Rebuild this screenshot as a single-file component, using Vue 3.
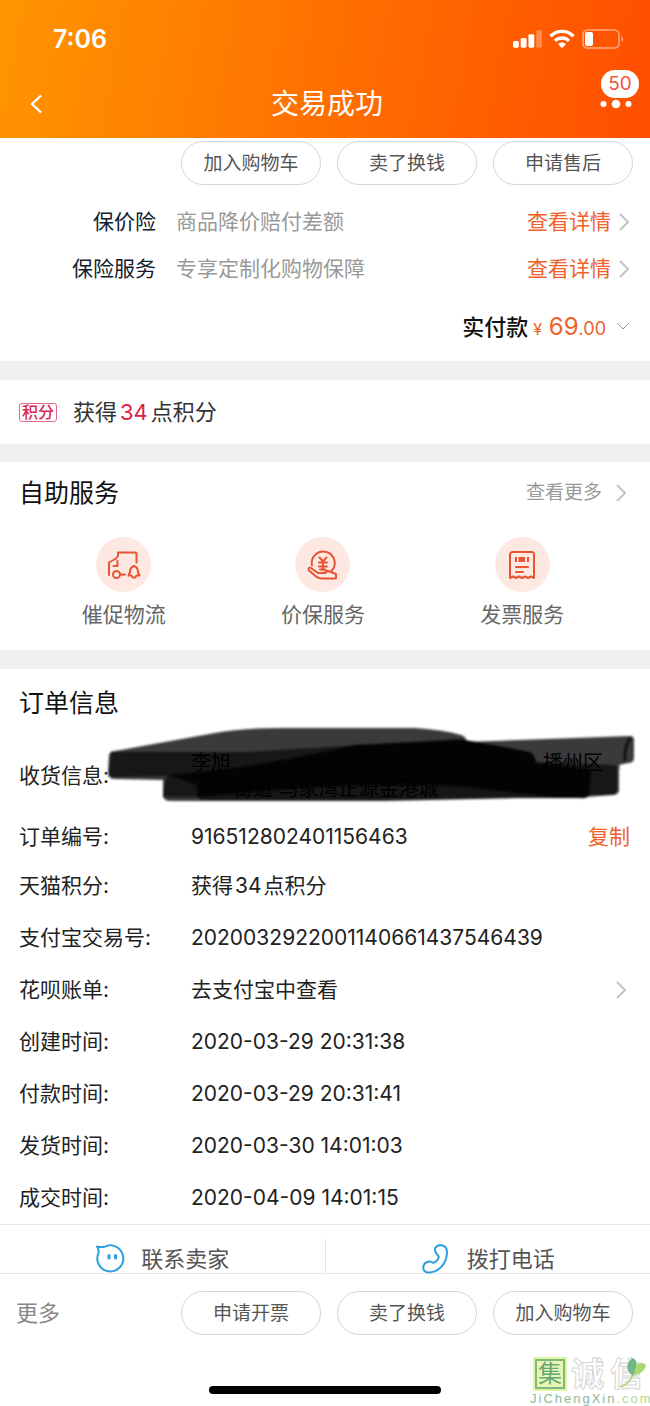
<script setup>
const insurance = [
  { name: '保价险', desc: '商品降价赔付差额' },
  { name: '保险服务', desc: '专享定制化购物保障' },
]
const topActions = ['加入购物车', '卖了换钱', '申请售后']
const bottomActions = ['申请开票', '卖了换钱', '加入购物车']
const services = [
  { id: 'truck', label: '催促物流' },
  { id: 'price', label: '价保服务' },
  { id: 'invoice', label: '发票服务' },
]
const details = [
  { label: '支付宝交易号:', value: '2020032922001140661437546439' },
  { label: '花呗账单:', value: '去支付宝中查看', link: true },
  { label: '创建时间:', value: '2020-03-29 20:31:38' },
  { label: '付款时间:', value: '2020-03-29 20:31:41' },
  { label: '发货时间:', value: '2020-03-30 14:01:03' },
  { label: '成交时间:', value: '2020-04-09 14:01:15' },
]
</script>

<template>
  <div class="page">
    <header class="header">
      <div class="status">
        <span class="time">7:06</span>
        <div class="signals">
          <svg width="29" height="18" viewBox="0 0 30 18" fill="#fff" aria-hidden="true">
            <rect x="0" y="11" width="6" height="7" rx="1.5" />
            <rect x="8" y="8" width="6" height="10" rx="1.5" />
            <rect x="16" y="4" width="6" height="14" rx="1.5" />
            <rect x="24" y="0" width="6" height="18" rx="1.5" opacity=".3" />
          </svg>
          <svg width="26" height="20" viewBox="0 0 26 20" fill="none" stroke="#fff" stroke-width="3.4" aria-hidden="true">
            <path d="M1.500 7.200C8 .8 18 .8 24.500 7.200" />
            <path d="M6 11.900c4-3.900 10-3.900 14 0" />
            <path d="M13 19.300l-4-4.200c2.400-2 5.600-2 8 0z" fill="#fff" stroke="none" />
          </svg>
          <svg width="42" height="20" viewBox="0 0 42 20" aria-hidden="true">
            <rect x="1" y="1" width="36" height="18" rx="4.500" fill="none" stroke="#fff" stroke-opacity=".5" stroke-width="1.500" />
            <rect x="3" y="3" width="8" height="14" rx="2" fill="#fff" />
            <path d="M39.500 7c2 1 2 5 0 6z" fill="#fff" fill-opacity=".5" />
          </svg>
        </div>
      </div>
      <div class="nav">
        <button class="icon-button back" aria-label="返回">
          <svg width="12" height="18" viewBox="0 0 12 18" fill="none" stroke="#fff" stroke-width="2.400" stroke-linecap="round" stroke-linejoin="round"><path d="M10.500 1L2 9l8.500 8" /></svg>
        </button>
        <h1>交易成功</h1>
        <button class="icon-button more" aria-label="更多消息">
          <svg width="32" height="10" viewBox="0 0 32 10" fill="#fff"><circle cx="3.500" cy="5" r="3" /><circle cx="16" cy="5" r="4.300" /><circle cx="28.500" cy="5" r="3" /></svg>
          <span class="badge">50</span>
        </button>
      </div>
    </header>

    <main>
      <section class="summary">
        <div class="actions">
          <button v-for="a in topActions" :key="a" class="pill">{{ a }}</button>
        </div>
        <div v-for="i in insurance" :key="i.name" class="insurance">
          <span class="name">{{ i.name }}</span>
          <span class="desc">{{ i.desc }}</span>
          <a href="#">查看详情<svg width="10" height="18" viewBox="0 0 10 18" class="chevron"><path d="M1 1l8 8-8 8" /></svg></a>
        </div>
        <div class="paid">
          <div class="amount">
            <strong>实付款</strong>
            <span class="price"><small>¥</small> 69<small class="cents">.00</small></span>
          </div>
          <svg width="14" height="9" viewBox="0 0 14 9" class="chevron"><path d="M1 1l6 6 6-6" /></svg>
        </div>
      </section>

      <section class="points">
        <span class="tag">积分</span>
        <p>获得<b>34</b>点积分</p>
      </section>

      <section class="self">
        <div class="heading">
          <h2>自助服务</h2>
          <a href="#">查看更多<svg width="10" height="18" viewBox="0 0 10 18" class="chevron"><path d="M1 1l8 8-8 8" /></svg></a>
        </div>
        <div class="services">
          <button v-for="s in services" :key="s.id" class="service">
            <span class="disc">
              <svg width="34" height="34" viewBox="0 0 34 34" fill="none" stroke="#e95532" stroke-width="2" stroke-linecap="round" stroke-linejoin="round">
                <g v-if="s.id === 'truck'">
                  <path d="M2 27V14.500l7-4 2-2.500V4.500h17a1.500 1.500 0 0 1 1.500 1.500v8.500M10.500 13v5H6.500M13.500 26.500H18" />
                  <circle cx="9.500" cy="26.500" r="3.500" />
                  <path d="M27 18c-3 1-4 3.500-4 6l-1.500 3.500h3l1.200 2h2.600l1.200-2h3L31 24c0-2.500-1-5-4-6z" />
                </g>
                <g v-else-if="s.id === 'price'">
                  <path d="M6 17.500A11.500 11.500 0 1 1 25.500 23" />
                  <path d="M13.500 9.500l3.500 4 3.500-4M17 14v8M13 14.500h8M13 18.500h8" />
                  <path d="M5 20l7 5h6.500c2.500 0 2.500-3.500 0-3.500H14M5 20c-1.500-1-3.500.5-2 2.500l7 6c2 1.500 4 2 6 2h14v-4.500l-8-3-4 2" />
                </g>
                <g v-else>
                  <path d="M5 30V6.500A2.500 2.500 0 0 1 7.500 4h19A2.500 2.500 0 0 1 29 6.500V30l-3-1.500-3 1.500-3-1.500-3 1.500-3-1.500-3 1.500-3-1.500z" />
                  <path d="M11 9v5M14.500 9v5M19 9v5M23 9v5" stroke-width="2" stroke-linecap="butt" />
                  <path d="M16.500 9v5" stroke-width="3" stroke-linecap="butt" />
                  <path d="M11 19h12M11 24h7" />
                </g>
              </svg>
            </span>
            <span>{{ s.label }}</span>
          </button>
        </div>
      </section>

      <section class="order">
        <h2>订单信息</h2>
        <dl>
          <div class="row address">
            <dt>收货信息:</dt>
            <dd class="hidden-lines">
              <span class="line"><span>李旭</span><span class="district">播州区</span></span>
              <span class="line street">街道 马家湾正源金港城</span>
            </dd>
            <svg class="scribble" viewBox="0 0 532 82" preserveAspectRatio="none" aria-hidden="true">
              <g class="strokes">
                <path d="M4 30Q5 26 10 26L110 8Q135 3 180 3H310Q340 5 356 10Q362 12 361 17L525 11Q529 11 529 15V33Q529 38 523 38L514 40Q515 40 514 46V66Q513 70 507 70L482 72H460L280 76H66Q58 76 58 70V55L10 54Q3 54 3 48Z" fill="#3a3a3a" />
                <path d="M6 27H140L355 14L425 27L432 37L509 40Q513 41 512 46V66Q511 70 506 70H482L470 72H90L58 72Q60 53 62 51L8 52Q3 51 4 46Z" fill="#171717" />
                <path d="M64 50Q150 43 250 20L358 15L420 26Q432 28 430 38L486 45L484 70Q482 74 475 73H93L92 60Z" fill="#030303" />
                <path d="M94 72L180 64Q300 56 360 62L450 72L280 75H96Z" fill="#161616" />
                <path d="M526 13Q519 20 520 36" fill="none" stroke="#111" stroke-width="3" />
              </g>
            </svg>
          </div>
          <div class="row number">
            <dt>订单编号:</dt>
            <dd>916512802401156463</dd>
            <button class="copy">复制</button>
          </div>
          <div class="row">
            <dt>天猫积分:</dt>
            <dd>获得<span class="gap">34</span>点积分</dd>
          </div>
          <div v-for="d in details" :key="d.label" class="row">
            <dt>{{ d.label }}</dt>
            <dd v-if="!d.link">{{ d.value }}</dd>
            <dd v-else><a href="#">{{ d.value }}<svg width="10" height="18" viewBox="0 0 10 18" class="chevron"><path d="M1 1l8 8-8 8" /></svg></a></dd>
          </div>
        </dl>
      </section>

      <section class="contact">
        <button>
          <svg width="30" height="30" viewBox="0 0 30 30" fill="none" stroke="#2b9fe0" stroke-width="2" stroke-linejoin="round">
            <path d="M2 2.500c3.500 1 5 .8 7.500.3A13 13 0 1 1 3.500 9C4 6 3.500 4.500 2 2.500z" />
            <path d="M14 11.500v2.500M20.500 11.500v2.500" stroke-width="3" stroke-linecap="round" />
          </svg>
          联系卖家
        </button>
        <button>
          <svg width="30" height="30" viewBox="0 0 30 30" fill="none" stroke="#2b9fe0" stroke-width="2">
            <path d="M14.500 3.500C18-.5 26 .5 26 8c0 11-8 20-17 20.500C4 29 1.500 26 2.500 22s6-5.500 9-3.500c2.500 1 8-4.500 5.500-7-2.500-2.500-4-5.500-2.500-8z" />
          </svg>
          拨打电话
        </button>
      </section>
    </main>

    <footer class="footer">
      <div class="footer-row">
        <button class="more-link">更多</button>
        <div class="actions">
          <button v-for="a in bottomActions" :key="a" class="pill">{{ a }}</button>
        </div>
      </div>
      <div class="home-bar"></div>
      <div class="watermark">
        <div class="brand">
          <span class="seal">集</span><span class="outline">诚</span><span class="outline">信</span>
          <svg class="leaf" width="30" height="34" viewBox="0 0 30 34" aria-hidden="true">
            <path d="M2 31Q12 28 15 18" fill="none" stroke="#b5d78c" stroke-width="2" />
            <path d="M15 20Q15 13 18 9Q24 5 28 9Q27 17 15 20z" fill="#a9d873" />
            <path d="M15 20Q7 14 10 7Q12 3 15 2Q20 5 18 10z" fill="#72b886" />
          </svg>
        </div>
        <div class="domain">JiChengXin<span>.com</span></div>
      </div>
    </footer>
  </div>
</template>

<style>
body {
  margin: 0;
  background: #fff;
}
</style>

<style scoped>
.page {
  font-family: Inter, "Noto Sans CJK SC", sans-serif;
  font-size: 21px;
  line-height: 30px;
  color: #222;
  background: #f0f0f0;
}
h1, h2, p, dl, dd { margin: 0; font-weight: 400; }
button {
  font: inherit;
  color: inherit;
  background: none;
  border: 0;
  padding: 0;
}
a {
  color: inherit;
  text-decoration: none;
}
svg { flex: none; display: block; }
section { background: #fff; }
.chevron {
  fill: none;
  stroke: #c4c4c4;
  stroke-width: 2;
}

.header {
  background: linear-gradient(100deg, #ff9500, #ff7000 50%, #ff4e00);
  color: #fff;
}
.status {
  height: 78px;
  padding: 0 26px 0 53px;
  display: flex;
  align-items: center;
  justify-content: space-between;
}
.time { font-size: 25px; font-weight: 600; }
.signals { display: flex; align-items: center; gap: 7px; }
.nav {
  height: 60px;
  padding: 0 18px 9px 30px;
  box-sizing: border-box;
  display: flex;
  align-items: center;
  justify-content: space-between;
}
.nav h1 { font-size: 28px; }
.icon-button { width: 32px; height: 32px; display: flex; align-items: center; }
.back { width: 24px; }
.more { position: relative; }
.badge {
  position: absolute;
  right: -7px;
  bottom: 22px;
  width: 38px;
  border-radius: 14px;
  background: #fff;
  color: #f2543d;
  font-size: 19px;
  line-height: 28px;
  text-align: center;
}

.actions { display: flex; justify-content: flex-end; gap: 16px; }
.pill {
  width: 140px;
  height: 44px;
  padding-top: 2px;
  border: 1px solid #d6d6d6;
  border-radius: 22px;
  font-size: 19px;
  color: #555;
}

.summary { padding: 3px 17px 0; margin-bottom: 19px; }
.insurance {
  display: grid;
  grid-template-columns: 139px 1fr auto;
  align-items: center;
  column-gap: 20px;
  height: 47px;
}
.actions + .insurance { margin-top: 13px; }
.name { text-align: right; color: #10202c; }
.desc { color: #999; }
.insurance a { display: flex; align-items: center; gap: 8px; color: #f0622b; margin-right: 4px; }
.paid {
  height: 69px;
  display: flex;
  align-items: center;
  justify-content: flex-end;
  gap: 10px;
}
.amount { display: flex; align-items: baseline; gap: 5px; padding-top: 2px; }
.paid strong { font-size: 22px; font-weight: 500; color: #111; }
.price { font-size: 24px; color: #f0622b; }
.price small { font-size: 16px; }
.price .cents { font-size: 18px; }
.paid .chevron { margin-right: 3px; stroke-width: 1; stroke: #999; }

.points {
  height: 64px;
  padding: 0 19px;
  margin-bottom: 18px;
  display: flex;
  align-items: center;
  gap: 16px;
  font-size: 22px;
}
.tag {
  border: 1px solid #e56a85;
  border-radius: 3px;
  padding: 0 2px;
  font-size: 16px;
  line-height: 17px;
  font-weight: 500;
  color: #dc2850;
}
.points p { color: #333; }
.points b { font-weight: 400; color: #dc2044; margin: 0 3px; }

h2 { font-size: 25px; color: #111; }
.self { height: 188px; margin-bottom: 19px; }
.heading {
  height: 61px;
  padding: 0 24px 0 19px;
  display: flex;
  align-items: center;
  justify-content: space-between;
}
.heading a {
  display: flex;
  align-items: center;
  gap: 14px;
  font-size: 19px;
  color: #999;
}
.services { display: flex; padding: 14px 28px 0 24px; }
.service {
  flex: 1;
  display: flex;
  flex-direction: column;
  align-items: center;
  gap: 8px;
  color: #666;
}
.disc {
  width: 55px;
  height: 55px;
  border-radius: 50%;
  background: #fee9e2;
  display: grid;
  place-items: center;
}

.order h2 { height: 70px; line-height: 68px; padding: 0 19px; }
.row {
  position: relative;
  display: flex;
  align-items: center;
  height: 52px;
  padding: 0 20px 0 19px;
}
.row dt { width: 172px; flex: none; }
.row dd { flex: 1; }
.row a { display: flex; align-items: center; justify-content: space-between; padding-right: 4px; }
.row.address { height: 74px; }
.row.number { height: 47px; }
.copy { color: #f0622b; }
.gap { margin: 0 2px; }
.hidden-lines {
  position: relative;
  z-index: 1;
  font-size: 20px;
  line-height: 26px;
  color: #000;
}
.line { display: flex; justify-content: space-between; }
.district { margin-right: 27px; }
.street { padding-left: 42px; }
.scribble {
  position: absolute;
  left: 105px;
  right: 13px;
  top: -14px;
  width: calc(100% - 118px);
  height: 82px;
}
.strokes { filter: blur(1px); }

.contact {
  display: flex;
  border-top: 1px solid #e8e8e8;
  border-bottom: 1px solid #e8e8e8;
  padding-top: 14px;
}
.contact button {
  flex: 1;
  height: 34px;
  display: flex;
  align-items: center;
  justify-content: center;
  gap: 16px;
  padding-top: 6px;
  box-sizing: border-box;
  font-size: 22px;
  color: #555;
}
.contact button + button { border-left: 1px solid #e2e2e2; }

.footer { position: relative; height: 132px; background: #fff; }
.footer-row {
  display: flex;
  align-items: center;
  justify-content: space-between;
  padding: 17px 17px 0 16px;
}
.more-link { font-size: 22px; color: #888; }
.home-bar {
  width: 232px;
  height: 8px;
  margin: 51px auto 0;
  border-radius: 4px;
  background: #000;
}
.watermark { position: absolute; right: 0; bottom: 0; width: 120px; }
.brand { position: relative; height: 36px; display: flex; align-items: center; gap: 6px; padding-left: 5px; }
.seal {
  width: 30px;
  box-sizing: border-box;
  border: 2px solid #7fb77e;
  outline: 2px solid #e3f3a4;
  background: #e8f6b4;
  color: #68a878;
  font-size: 24px;
  line-height: 26px;
  text-align: center;
}
.outline {
  font-size: 33px;
  line-height: 32px;
  font-weight: 700;
  color: #fff;
  -webkit-text-stroke: 1px #d6d6d6;
}
.leaf { position: absolute; right: 2px; top: 0; }
.domain {
  font-family: "Liberation Sans", Arial, sans-serif;
  font-size: 13px;
  line-height: 14px;
  letter-spacing: 2px;
  color: #8bb99a;
  white-space: nowrap;
}
.domain span { color: #b6d78a; }
</style>
